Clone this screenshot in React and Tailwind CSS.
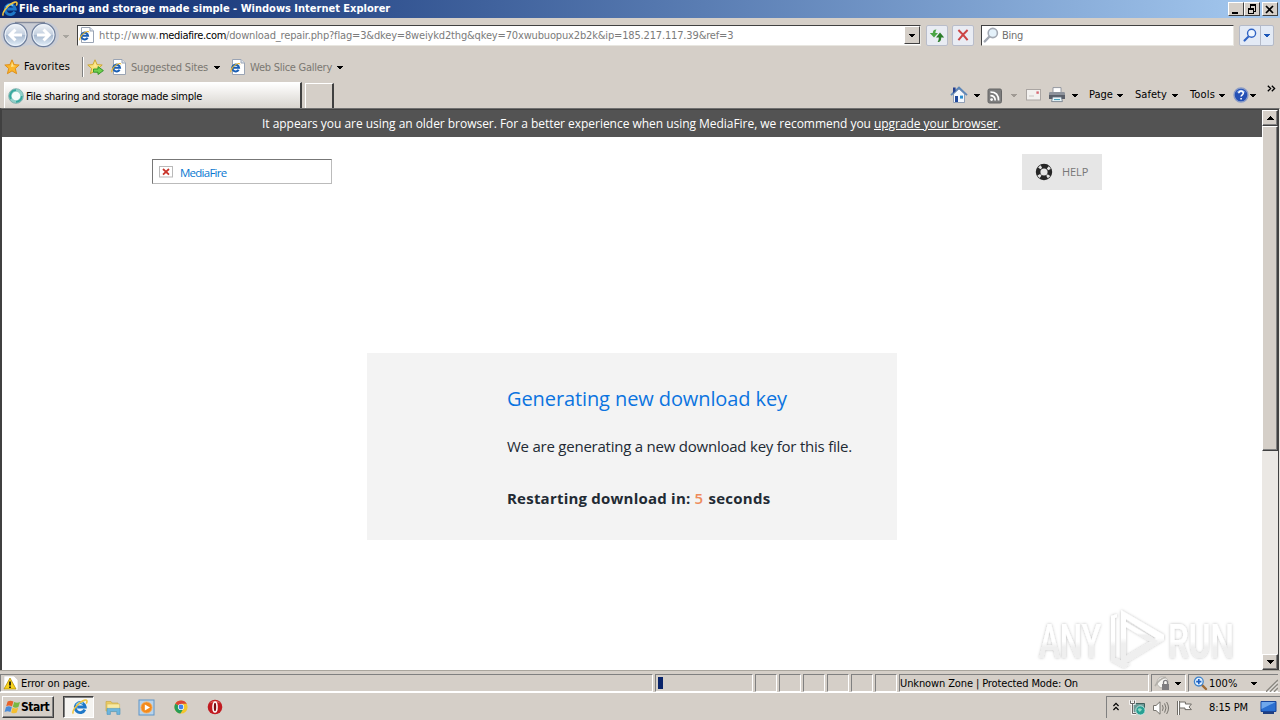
function Caret({ className = "text-black" }) {
  return (
    <svg width="6" height="3" viewBox="0 0 6 3" className={`shrink-0 ${className}`} shapeRendering="crispEdges">
      <path d="M0 0H6L3 3.4Z" fill="currentColor" />
    </svg>
  );
}

function IeGlyph({ size = 16 }) {
  return (
    <svg width={size} height={size} viewBox="0 0 16 16" className="shrink-0">
      <path d="M12.8 10.6A5 5 0 1 1 13.2 8H5.2" fill="none" stroke="#1f78c8" strokeWidth="2.9" />
      <path d="M4.2 6.2A4.6 4.6 0 0 1 11 4.4" fill="none" stroke="#7fd0f6" strokeWidth="1.4" />
      <path d="M1.4 14.6C-.6 12.8 4 6.3 8.6 3.2C11.8 1 15 .2 15 2.2C15 3 14.6 4 14.2 4.6" fill="none" stroke="#f0c440" strokeWidth="1.6" />
    </svg>
  );
}

function IePage() {
  return (
    <svg width="16" height="16" viewBox="0 0 16 16" className="shrink-0">
      <path d="M2.5 .5H11L14.5 4V15.5H2.5Z" fill="#fff" stroke="#9aa4b4" />
      <path d="M11 .5V4H14.5" fill="#dce4ee" stroke="#9aa4b4" />
      <path d="M8.6 10.7A3.4 3.4 0 1 1 9 8.8H3" fill="none" stroke="#1b5fb4" strokeWidth="2.1" />
      <path d="M1 13.2C0 12 2.6 7.4 5.6 5.6C7.8 4.4 10 3.8 9.8 5.4" fill="none" stroke="#e9b52a" strokeWidth="1.1" />
    </svg>
  );
}

function Star({ plus }) {
  return (
    <svg width="17" height="16" viewBox="0 0 17 16" className="shrink-0">
      <path d="M8 .8L10.1 5.6L15.2 6L11.3 9.5L12.6 14.7L8 11.9L3.4 14.7L4.7 9.5L.8 6L5.9 5.6Z" fill={plus ? "#f8e27a" : "#fbb62c"} stroke={plus ? "#c9a227" : "#dc8a12"} strokeWidth=".9" />
      <path d="M8 2.8L9.2 6.5L12 7L7 8Z" fill="#ffe793" />
      {plus && <path d="M6.5 10H11V7.6L16.4 11.6L11 15.5V13.2H6.5Z" fill="#6fd04d" stroke="#2c9126" strokeWidth=".9" />}
    </svg>
  );
}

function NavButtons() {
  return (
    <svg width="58" height="30" viewBox="0 0 58 30" className="shrink-0">
      <defs>
        <linearGradient id="orb" x1="0" y1="0" x2="0" y2="1">
          <stop offset="0" stopColor="#f3f6fa" />
          <stop offset=".48" stopColor="#c3cfdf" />
          <stop offset=".52" stopColor="#a9bad0" />
          <stop offset="1" stopColor="#e6f2fc" />
        </linearGradient>
      </defs>
      <path d="M13 2H45A13 13 0 0 1 45 28C38 28 34 25 29 25C24 25 20 28 13 28A13 13 0 0 1 13 2Z" fill="#c9ccd4" />
      <path d="M14 2.5H44" stroke="#858b9c" strokeWidth="1.4" />
      {[14.5, 42.5].map((x) => (
        <circle key={x} cx={x} cy="15" r="11.6" fill="url(#orb)" stroke="#6f7f9c" strokeWidth="1.2" />
      ))}
      {[14.5, 42.5].map((x) => (
        <circle key={x} cx={x} cy="15" r="10.4" fill="none" stroke="#eef4fb" strokeWidth="1" />
      ))}
      <path d="M21 15H9.5M14.5 9.6L8.9 15L14.5 20.4" fill="none" stroke="#fff" strokeWidth="3" />
      <path d="M36 15H47.5M42.5 9.6L48.1 15L42.5 20.4" fill="none" stroke="#fff" strokeWidth="3" />
    </svg>
  );
}

function Magnifier({ rim, glass, size = 16 }) {
  return (
    <svg width={size} height={size} viewBox="0 0 16 16" className="shrink-0">
      <path d="M7 9L1.8 14.4" stroke={rim} strokeWidth="2.4" strokeLinecap="round" />
      <circle cx="9.8" cy="6" r="4.6" fill={glass} stroke={rim} strokeWidth="1.6" />
    </svg>
  );
}

function CaptionButton({ children, className = "" }) {
  return (
    <div className={`flex h-[14px] w-[16px] items-center justify-center border border-t-white border-r-[#404040] border-b-[#404040] border-l-white bg-[#d5cfc8] ${className}`}>
      <svg width="12" height="11" viewBox="0 0 12 11" shapeRendering="crispEdges">{children}</svg>
    </div>
  );
}

function TitleBar() {
  return (
    <div className="flex h-[18px] items-center bg-linear-to-r from-[#0a246a] to-[#a6caf0] pr-[2px] pl-[2px]">
      <IeGlyph size={16} />
      <span className="flex-1 pl-px text-[11px] leading-[16px] font-bold whitespace-pre text-white">File sharing and storage made simple - Windows Internet Explorer</span>
      <CaptionButton><path d="M2 8H8V10H2Z" fill="#000" /></CaptionButton>
      <CaptionButton>
        <path d="M4 1.5H10M4.5 1V4M9.5 1V7H7M4 .5H10" fill="none" stroke="#000" />
        <path d="M2 4H8V5.5H2ZM2 4H3V10H2ZM7 4H8V10H7ZM2 9H8V10H2Z" fill="#000" />
      </CaptionButton>
      <CaptionButton className="ml-[2px]"><path d="M2 2L9 9M9 2L2 9" stroke="#000" strokeWidth="1.7" shapeRendering="auto" /></CaptionButton>
    </div>
  );
}

function AddressRow() {
  return (
    <div className="flex h-[36px] items-center pr-[6px] pb-[2px] pl-px text-[11px]">
      <NavButtons />
      <Caret className="mt-[2px] ml-[4px] text-[#a8a59f]" />
      <div className="ml-[8px] flex h-[21px] w-[844px] items-center border border-t-[#404040] border-r-[#e8e6e0] border-b-[#e8e6e0] border-l-[#404040] bg-white">
        <div className="ml-px"><IePage /></div>
        <div className="ml-[4px] flex flex-1 pt-[3px] whitespace-pre text-[#7b7b7b]">
          <span className="tracking-[0.295px]">http://www.</span>
          <span className="tracking-[-0.328px] text-black">mediafire.com</span>
          <span className="tracking-[-0.158px]">/download_repair.php?flag=3&amp;dkey=8weiykd2thg&amp;qkey=70xwubuopux2b2k&amp;ip=185.217.117.39&amp;ref=3</span>
        </div>
        <div className="flex h-[18px] w-[16px] items-center justify-center border border-t-white border-r-[#404040] border-b-[#404040] border-l-white bg-[#d5cfc8]">
          <Caret />
        </div>
      </div>
      <div className="ml-[5px] flex h-[21px] w-[22px] items-center justify-center rounded-[2px] border border-[#b9bdca] bg-[#e9ecf3]">
        <svg width="16" height="15" viewBox="0 0 16 15">
          <path d="M7.5 1.4C4.6 1.4 3.8 3 3.8 5H.8L5 9.6L9 5H6.4C6.4 3.4 6.8 2.6 7.5 1.4Z" fill="#4aa544" />
          <path d="M8.6 14C11.6 14 12.2 11.6 12.2 9.4H15.2L11 4.6L7 9.4H9.8C9.8 11 9.4 12.8 8.6 14Z" fill="#2c7d2a" />
        </svg>
      </div>
      <div className="ml-[4px] flex h-[21px] w-[22px] items-center justify-center rounded-[2px] border border-[#b9bdca] bg-[#e9ecf3]">
        <svg width="14" height="14" viewBox="0 0 14 14">
          <path d="M2.4 2C5 4.4 9 9 11.6 12.2M11.6 2C9 4.4 5 9 2.4 12.2" stroke="#cc4444" strokeWidth="2" fill="none" />
        </svg>
      </div>
      <div className="ml-[7px] flex h-[21px] w-[253px] items-center border border-t-[#404040] border-r-[#e8e6e0] border-b-[#e8e6e0] border-l-[#404040] bg-white pl-px">
        <Magnifier rim="#a3a9b3" glass="#e4f1fa" />
        <span className="pt-[3px] pl-[3px] tracking-[-0.277px] text-[#6f6f6f]">Bing</span>
      </div>
      <div className="ml-[5px] flex h-[21px] w-[35px] items-center rounded-[2px] border border-[#b4bac8] bg-[#e3eaf5]">
        <div className="flex h-full w-[21px] items-center justify-center border-r border-[#b4bac8]"><Magnifier rim="#2f63c4" glass="#eef6ff" size={14} /></div>
        <div className="flex flex-1 justify-center"><Caret className="text-[#1c57b8]" /></div>
      </div>
    </div>
  );
}

function FavoritesRow() {
  return (
    <div className="flex h-[26px] items-center pl-[4px] text-[11px] whitespace-nowrap text-[#7b7872]">
      <Star />
      <span className="w-[58px] pl-[3px] tracking-[0.155px] text-black">Favorites</span>
      <div className="ml-[3px] h-[20px] w-[2px] border-r border-l border-r-white border-l-[#808080]" />
      <div className="ml-[3px]"><Star plus /></div>
      <div className="ml-[7px]"><IePage /></div>
      <span className="ml-[4px] w-[83px] pt-[2px] tracking-[-0.196px]">Suggested Sites</span>
      <Caret />
      <div className="ml-[10px]"><IePage /></div>
      <span className="ml-[4px] w-[87px] pt-[2px] tracking-[-0.257px]">Web Slice Gallery</span>
      <Caret />
    </div>
  );
}

function CommandBar() {
  return (
    <div className="flex h-[26px] items-center text-[11px] text-black">
      <svg width="18" height="18" viewBox="0 0 18 18">
        <path d="M3.5 8V16.5H14.5V8L9 3Z" fill="#f4f8fd" stroke="#7c8ea9" strokeWidth=".8" />
        <path d="M1 9.2L9 1.6L17 9.2" fill="none" stroke="#5c86b8" strokeWidth="1.8" />
        <path d="M3 1.5H5.6V5L3 7.2Z" fill="#25408f" />
        <path d="M5 10H8V16H5Z" fill="#20499c" />
        <path d="M10 9.6H13V12.6H10Z" fill="#2b8fd0" />
      </svg>
      <Caret className="ml-[6px]" />
      <svg width="16" height="16" viewBox="0 0 16 16" className="mt-px ml-[7px]">
        <rect x="1" y="1" width="13.5" height="14" rx="1.5" fill="#7d7d7d" stroke="#666" />
        <path d="M3.4 4C8.4 4 11.6 7 11.6 12.6M3.4 7.6C6.6 7.6 8.2 9.4 8.2 12.6" fill="none" stroke="#fff" strokeWidth="1.7" />
        <circle cx="4.6" cy="11.6" r="1.4" fill="#fff" />
      </svg>
      <Caret className="ml-[8px] text-[#a09a94]" />
      <svg width="16" height="12" viewBox="0 0 16 12" className="ml-[9px]">
        <rect x=".5" y=".5" width="14" height="10.5" fill="#f3f1ef" stroke="#aaa5a2" />
        <path d="M10.4 2.4H12.8V4.8H10.4Z" fill="#d66a74" />
        <path d="M3 7H8" stroke="#c9c5c2" />
      </svg>
      <svg width="18" height="16" viewBox="0 0 18 16" className="ml-[6px]">
        <path d="M5 .6H13V6H5Z" fill="#fff" stroke="#8a8f98" strokeWidth=".9" />
        <path d="M1 6.2Q1 5 2.4 5H15.6Q17 5 17 6.2V11.6H1Z" fill="#8d929b" />
        <path d="M1 8H17V12H1Z" fill="#5a5f69" />
        <path d="M4.6 10H13.4L14.4 14.6H3.6Z" fill="#e9f4f8" stroke="#687482" strokeWidth=".8" />
        <path d="M6 12.6H12" stroke="#3b9cb8" />
      </svg>
      <Caret className="ml-[6px]" />
      <span className="ml-[11px] w-[28px]">Page</span>
      <Caret />
      <span className="ml-[12px] w-[37px] tracking-[0.05px]">Safety</span>
      <Caret />
      <span className="ml-[12px] w-[29px] tracking-[0.16px]">Tools</span>
      <Caret />
      <svg width="16" height="16" viewBox="0 0 16 16" className="ml-[8px]">
        <circle cx="8" cy="8" r="7" fill="#2450b5" stroke="#8b9cc6" strokeWidth="1.4" />
        <path d="M3.4 5.4A5.4 5.4 0 0 1 12.6 5.4Z" fill="#6d98e4" />
        <path d="M5.8 6.2C5.8 3.2 10.4 3.4 10.3 6.2C10.2 7.8 8.1 7.8 8.1 9.6M8.1 11V12.6" fill="none" stroke="#fff" strokeWidth="1.6" />
      </svg>
      <Caret className="ml-px" />
      <svg width="9" height="7" viewBox="0 0 9 7" className="mb-[13px] ml-[11px]">
        <path d="M.8 .8L3.6 3.5L.8 6.2M4.8 .8L7.6 3.5L4.8 6.2" fill="none" stroke="#000" strokeWidth="1.3" />
      </svg>
    </div>
  );
}

function TabRow() {
  return (
    <div className="flex h-[28px] items-end pr-[4px] pl-[4px]">
      <div className="flex h-[26px] w-[298px] items-center border-t border-r-2 border-l border-t-white border-r-[#404040] border-l-white bg-linear-to-b from-white to-[#d8d4ce] pl-[3px] text-[11px] text-black">
        <svg width="16" height="16" viewBox="0 0 16 16" className="shrink-0">
          <circle cx="8" cy="8" r="5.8" fill="#f4fbfa" stroke="#8fcfc8" strokeWidth="3" />
          <path d="M8 2.2A5.8 5.8 0 0 0 3 11M8 13.8A5.8 5.8 0 0 0 13.8 8" fill="none" stroke="#35a89f" strokeWidth="1.8" />
          <circle cx="8" cy="8" r="7.4" fill="none" stroke="#5f9b98" strokeWidth=".6" />
        </svg>
        <span className="pt-[3px] pl-[2px] tracking-[-0.279px] whitespace-nowrap">File sharing and storage made simple</span>
      </div>
      <div className="ml-[3px] h-[25px] w-[29px] border-t border-r-2 border-l border-t-white border-r-[#404040] border-l-white" />
      <div className="flex-1" />
      <CommandBar />
    </div>
  );
}

function ScrollButton({ up }) {
  return (
    <div className="flex h-[16px] w-full items-center justify-center border border-t-white border-r-[#404040] border-b-[#404040] border-l-white bg-[#d5cfc8] shadow-[inset_-1px_-1px_0_#808080]">
      <svg width="8" height="4" viewBox="0 0 8 4" shapeRendering="crispEdges"><path d={up ? "M0 4H8L4 0Z" : "M0 0H8L4 4Z"} /></svg>
    </div>
  );
}

function Scrollbar() {
  return (
    <div className="flex w-[16px] flex-col bg-[#ebe8e4]">
      <ScrollButton up />
      <div className="h-[325px] border border-t-white border-r-[#404040] border-b-[#404040] border-l-white bg-[#d5cfc8] shadow-[inset_-1px_-1px_0_#808080]" />
      <div className="flex-1" />
      <ScrollButton />
    </div>
  );
}

function Lifebuoy() {
  return (
    <svg width="18" height="18" viewBox="0 0 18 18" className="shrink-0">
      <circle cx="9" cy="9" r="5.9" fill="none" stroke="#262626" strokeWidth="4.6" />
      <circle cx="9" cy="9" r="5.9" fill="none" stroke="#e6e6e6" strokeWidth="3" strokeDasharray="2.6 6.667" strokeDashoffset="-3.3" />
    </svg>
  );
}

function Watermark() {
  return (
    <svg width="216" height="69" viewBox="1028 601 216 69" className="absolute right-[18px] bottom-0">
      <defs>
        <linearGradient id="fade" x1="0" y1="0" x2="0" y2="1">
          <stop offset=".5" stopColor="#fff" />
          <stop offset=".6" stopColor="#efefef" />
        </linearGradient>
        <filter id="halo" x="-10%" y="-20%" width="120%" height="140%">
          <feDropShadow dx="0" dy="0" stdDeviation="1.8" floodColor="#000" floodOpacity=".27" />
        </filter>
      </defs>
      <g filter="url(#halo)" fill="url(#fade)" fontFamily="Roboto, sans-serif" fontSize="49" fontWeight="500">
        <text x="1039" y="658" textLength="62" lengthAdjust="spacingAndGlyphs">ANY</text>
        <text x="1168" y="658" textLength="66" lengthAdjust="spacingAndGlyphs">RUN</text>
        <path d="M1121 610L1164 635V640L1121 666ZM1126 619V656L1156 638Z" fillRule="evenodd" />
        <path d="M1117 614L1111 616V661L1124 668L1130 664L1115 658V618L1117 617Z" />
        <path d="M1126 622L1158 641L1154 644L1126 627Z" />
      </g>
    </svg>
  );
}

function Page() {
  return (
    <div className="relative flex min-w-0 flex-1 flex-col bg-white font-['Open_Sans',sans-serif]">
      <div className="flex h-[27px] items-center bg-[#535353] pl-[260px] text-[12px] whitespace-pre text-white">
        <span className="tracking-[-0.034px]">It appears you are using an older browser. For a better experience when using MediaFire, we recommend you </span>
        <span className="tracking-[-0.05px]"><span className="underline">upgrade your browser</span>.</span>
      </div>
      <div className="flex items-start justify-between pt-[17px] pr-[160px] pl-[150px]">
        <div className="mt-[5px] flex h-[25px] w-[180px] items-center border border-t-[#777] border-r-[#bbb] border-b-[#bbb] border-l-[#777] pl-[6px]">
          <svg width="14" height="12" viewBox="0 0 14 12" className="shrink-0">
            <rect x=".5" y=".5" width="13" height="10.5" fill="#fff" stroke="#b9b9b9" />
            <path d="M4 3L10 8.6M10 3L4 8.6" stroke="#c9352b" strokeWidth="1.8" />
          </svg>
          <span className="pt-[3px] pl-[7px] text-[11.5px] tracking-[-0.75px] text-[#0877d0]">MediaFire</span>
        </div>
        <div className="flex h-[36px] w-[80px] items-center bg-[#e6e6e6] pl-[13px]">
          <Lifebuoy />
          <span className="pl-[9px] text-[11px] tracking-[-0.1px] text-[#777]">HELP</span>
        </div>
      </div>
      <div className="mt-[163px] ml-[365px] flex h-[187px] w-[530px] flex-col bg-[#f3f3f3] pt-[31px] pl-[140px] whitespace-pre text-[#222a33]">
        <div className="h-[30px] text-[20px] leading-[30px] tracking-[-0.098px] text-[#0b74e0]">Generating new download key</div>
        <div className="mt-[21px] h-[22px] text-[15px] leading-[22px] tracking-[-0.231px]">We are generating a new download key for this file.</div>
        <div className="mt-[30px] h-[22px] text-[15px] leading-[22px] font-bold tracking-[0.22px]">
          Restarting download in: <span className="font-semibold text-[#ee8b5b]">5</span> <span className="pl-px tracking-[0.25px]">seconds</span>
        </div>
      </div>
      <Watermark />
    </div>
  );
}

function Pane({ className = "", children }) {
  return (
    <div className={`flex h-[18px] shrink-0 items-center border border-t-[#808080] border-r-white border-b-white border-l-[#808080] ${className}`}>{children}</div>
  );
}

function StatusBar() {
  return (
    <div className="flex h-[23px] items-start gap-[2px] border-t border-b border-t-[#aaa69e] border-b-white pt-[3px] text-[11px] text-black">
      <Pane className="w-[653px] pl-[2px]">
        <svg width="16" height="16" viewBox="0 0 16 16" className="shrink-0">
          <path d="M1 1H11L15 5V15H1Z" fill="#fff" stroke="#c9c6c0" strokeWidth=".6" />
          <path d="M7 3L13 14H1Z" fill="#f8d21c" stroke="#b08e0a" strokeWidth=".8" />
          <path d="M7 6.4V10.4M7 11.4V13" stroke="#111" strokeWidth="1.7" />
        </svg>
        <span className="pt-[2px] pl-[2px] tracking-[-0.11px]">Error on page.</span>
      </Pane>
      <Pane className="w-[98px] pl-[2px]"><div className="h-[12px] w-[5px] bg-[#0a246a]" /></Pane>
      <Pane className="w-[22px]" />
      <Pane className="w-[22px]" />
      <Pane className="w-[22px]" />
      <Pane className="w-[22px]" />
      <Pane className="w-[22px]" />
      <Pane className="w-[22px]" />
      <Pane className="w-[250px]"><span className="pt-[2px] tracking-[-0.117px]">Unknown Zone | Protected Mode: On</span></Pane>
      <Pane className="w-[35px] pl-[2px]">
        <svg width="18" height="16" viewBox="0 0 18 16" className="shrink-0">
          <circle cx="8.6" cy="7.4" r="5.6" fill="#f7f6f3" stroke="#b6b3ad" />
          <path d="M1 11C4 6 8 3 12 2.4" fill="none" stroke="#b3b0aa" strokeWidth="1.6" />
          <path d="M8 9H15V15H8Z" fill="#7e7d80" />
          <path d="M9.5 9V7.4A2 2 0 0 1 13.5 7.4V9" fill="none" stroke="#7e7d80" strokeWidth="1.3" />
        </svg>
        <Caret className="ml-[3px]" />
      </Pane>
      <Pane className="w-[90px] border-r-0 pl-[4px]">
        <svg width="15" height="15" viewBox="0 0 15 15" className="shrink-0">
          <path d="M8.6 8.6L13 13" stroke="#a06b35" strokeWidth="2.4" strokeLinecap="round" />
          <circle cx="5.8" cy="5.6" r="4.4" fill="#e1f1ff" stroke="#3f83cb" strokeWidth="1.3" />
          <path d="M5.8 3V8.2M3.2 5.6H8.4" stroke="#1c5fc2" strokeWidth="1.6" />
        </svg>
        <span className="w-[43px] pt-[2px] pl-px">100%</span>
        <Caret className="ml-px" />
        <svg width="12" height="13" viewBox="0 0 12 13" className="mt-[4px] ml-[9px] shrink-0">
          <path d="M0 13L12 1M4 13L12 5M8 13L12 9" stroke="#8c8982" strokeWidth="1.6" />
          <path d="M1.4 13L12 2.4M5.4 13L12 6.4M9.4 13L12 10.4" stroke="#fff" strokeWidth=".7" />
        </svg>
      </Pane>
    </div>
  );
}

function Taskbar() {
  return (
    <div className="flex h-[27px] items-center pt-[3px] pb-[2px] pl-[2px] text-[11px] text-black">
      <div className="flex h-[22px] w-[52px] items-center border border-t-white border-r-[#404040] border-b-[#404040] border-l-white pl-px shadow-[inset_-1px_-1px_0_#808080]">
        <svg width="17" height="16" viewBox="0 0 17 16" className="shrink-0">
          <path d="M3.6 2.6Q6.4 .8 9.4 2.6L8 7.4Q5 5.8 2.2 7.2Z" fill="#e8622a" />
          <path d="M10.2 3Q13 4.6 16 3L14.4 8Q11.6 9.4 8.8 7.8Z" fill="#78b843" />
          <path d="M2 8Q5 6.6 7.8 8.2L6.4 13Q3.6 11.4 .6 13Z" fill="#4a8bd8" />
          <path d="M8.6 8.6Q11.4 10.2 14.2 8.8L12.8 13.6Q10 15 7.2 13.4Z" fill="#f5bf30" />
        </svg>
        <span className="text-[12px] font-bold tracking-[-0.5px]">Start</span>
      </div>
      <div className="ml-[9px] flex h-[22px] w-[31px] items-center justify-center border border-t-[#404040] border-r-white border-b-white border-l-[#404040] bg-[#f5f4f1] pl-[3px] shadow-[inset_1px_1px_0_#808080]"><IeGlyph /></div>
      <svg width="18" height="17" viewBox="0 0 18 17" className="ml-[10px]">
        <path d="M2 2.5H7L8 4H14V12H2Z" fill="#eccb62" stroke="#c9a94a" strokeWidth=".7" />
        <path d="M3 5H15.6V12H3Z" fill="#f9eaa2" stroke="#d5b95a" strokeWidth=".6" />
        <path d="M3 9.4H16V15.4H12.8V12.6H6.4V15.4H3Z" fill="#6db6de" stroke="#4c93bd" strokeWidth=".6" />
      </svg>
      <svg width="17" height="17" viewBox="0 0 17 17" className="ml-[16px]">
        <rect x="1" y="1" width="15" height="15" fill="#b9d3ea" stroke="#5f95c8" />
        <circle cx="8.5" cy="8.5" r="5.6" fill="#f38a1c" stroke="#fbb160" strokeWidth=".8" />
        <path d="M6.8 5.4L12 8.5L6.8 11.6Z" fill="#fff" />
      </svg>
      <svg width="16" height="16" viewBox="0 0 16 16" className="ml-[18px]">
        <circle cx="8" cy="8" r="6.6" fill="#f4c62c" />
        <path d="M8 8L2.3 4.7A6.6 6.6 0 0 1 13.8 4.8H8Z" fill="#dd4436" />
        <path d="M8 8L2.3 4.7A6.6 6.6 0 0 0 7.4 14.6L10.6 9.6Z" fill="#279c58" />
        <circle cx="8" cy="8" r="3.1" fill="#fff" />
        <circle cx="8" cy="8" r="2.4" fill="#4382ea" />
      </svg>
      <svg width="16" height="16" viewBox="0 0 16 16" className="ml-[18px]">
        <circle cx="8" cy="8" r="7.3" fill="#c11a20" />
        <path d="M2.4 4.6A7 7 0 0 1 13.6 4.6Q8 1.4 2.4 4.6Z" fill="#e46a66" />
        <ellipse cx="8" cy="8" rx="2" ry="5" fill="#7c0d12" stroke="#fff" strokeWidth="1.6" />
      </svg>
      <div className="flex-1" />
      <div className="flex h-[22px] w-[174px] items-center border-t border-l border-t-[#808080] border-l-[#808080] pl-[6px]">
        <svg width="6" height="9" viewBox="0 0 6 9" className="mb-[3px]"><path d="M.4 4L3 1.4L5.6 4M.4 8L3 5.4L5.6 8" fill="none" stroke="#000" strokeWidth="1.3" /></svg>
        <svg width="17" height="16" viewBox="0 0 17 16" className="ml-[10px]">
          <path d="M4.5 3.5H15.5V12.5H4.5Z" fill="#6a9a96" stroke="#3f5f5c" />
          <path d="M1.5 0V3.5H5.5V0M3.5 3.5V13.5H7" fill="none" stroke="#fff" strokeWidth="2.4" />
          <path d="M1.5 .5V3.5H5.5V.5M3.5 3.5V13.5H7" fill="none" stroke="#555" strokeWidth=".9" />
          <circle cx="11.4" cy="10.4" r="4.6" fill="#27a093" stroke="#d8efec" strokeWidth=".8" />
          <path d="M8.6 9Q11 7 13 9.6Q11 13 9.6 11Z" fill="#8ed8c4" />
        </svg>
        <svg width="18" height="16" viewBox="0 0 18 16" className="ml-[6px]">
          <path d="M1.5 5.5H4L8 1.8V14.2L4 10.5H1.5Z" fill="#fff" stroke="#77746e" />
          <path d="M10.4 5.2Q12 8 10.4 10.8M12.6 3.4Q15.4 8 12.6 12.6M14.6 2Q18.4 8 14.6 14" fill="none" stroke="#77746e" strokeWidth="1" />
        </svg>
        <svg width="17" height="16" viewBox="0 0 17 16" className="ml-[6px]">
          <path d="M1.5 1V15M3.5 1V15" stroke="#6f6c66" />
          <path d="M2.5 1V15" stroke="#fff" />
          <path d="M3.6 2H9.4V4H15.4L13 7L15.4 9.6H9V8H3.6Z" fill="#fff" stroke="#6f6c66" />
        </svg>
        <span className="ml-[16px] w-[51px] pt-px tracking-[-0.125px]">8:15 PM</span>
        <svg width="17" height="15" viewBox="0 0 17 15">
          <path d="M1 1.5H16V11.5H1Z" fill="#2a6fd0" stroke="#17459a" />
          <path d="M1.5 2H15.5Q10 5 1.5 9Z" fill="#6fa8ec" />
          <path d="M3 12H14V14H3Z" fill="#1f3f80" />
        </svg>
      </div>
    </div>
  );
}

export default function App() {
  return (
    <div className="flex h-[720px] w-[1280px] flex-col overflow-hidden bg-[#d5cfc8] font-['DejaVu_Sans_Condensed','DejaVu_Sans',sans-serif]">
      <TitleBar />
      <AddressRow />
      <FavoritesRow />
      <TabRow />
      <div className="flex h-[562px] border-t border-r border-l-2 border-t-[#707070] border-r-[#e6e3dd] border-l-[#404040]">
        <div className="flex flex-1 border-t border-t-[#404040]">
          <Page />
          <Scrollbar />
        </div>
        <div className="w-px bg-[#404040]" />
      </div>
      <StatusBar />
      <Taskbar />
    </div>
  );
}
